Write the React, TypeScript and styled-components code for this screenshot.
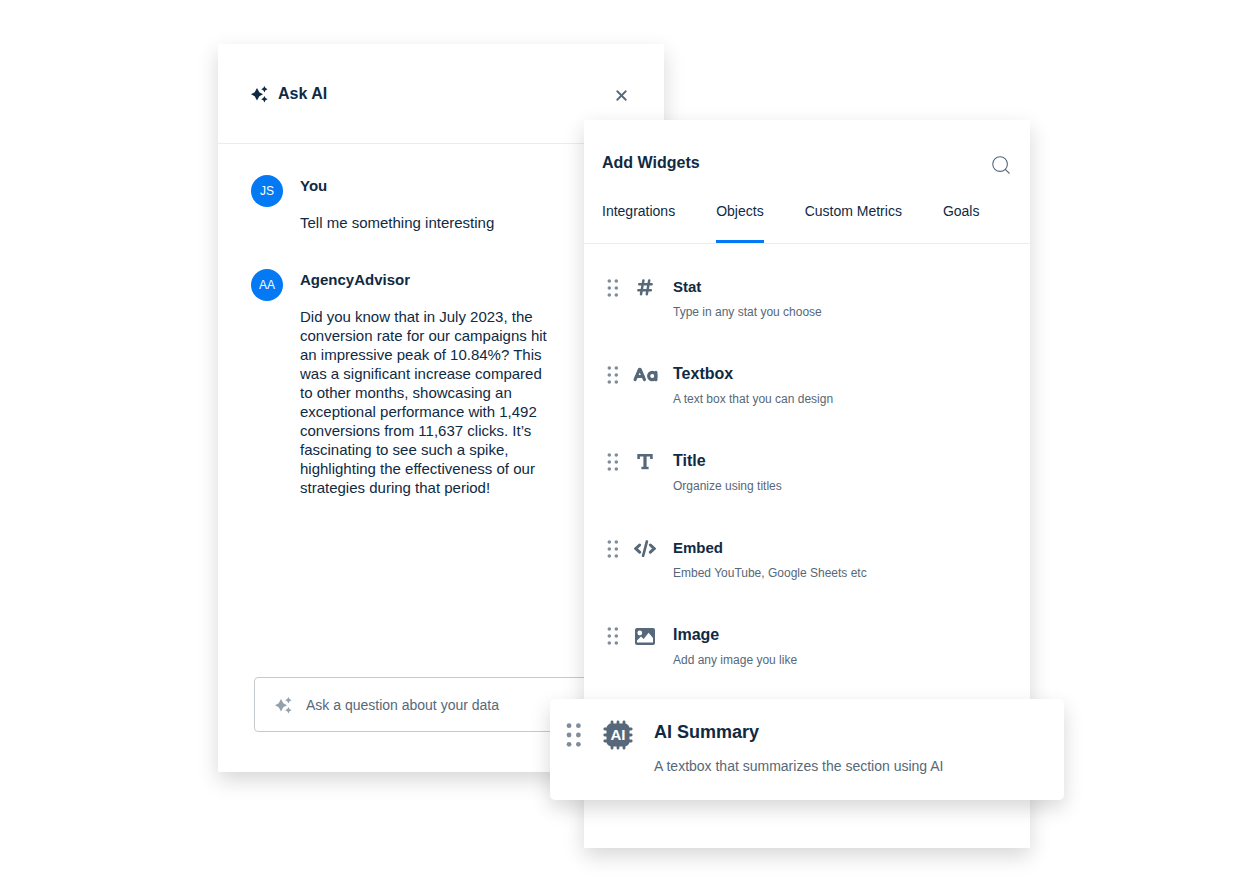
import React from "react";
import styled, { createGlobalStyle } from "styled-components";
import { CaseSensitive, Search, X } from "lucide-react";

const ink = "#0f2a43";
const slate = "#566879";
const blue = "#0479f4";
const line = "#ececee";

const GlobalStyle = createGlobalStyle`
  *, *::before, *::after { box-sizing: border-box; }
  body {
    margin: 0;
    background: #ffffff;
    color: ${ink};
    font-family: "Liberation Sans", Arial, Helvetica, sans-serif;
  }
  h2, h3, p, ul { margin: 0; padding: 0; }
  ul { list-style: none; }
  button {
    padding: 0;
    border: 0;
    background: none;
    color: inherit;
    font: inherit;
    cursor: pointer;
  }
  svg { display: block; flex: none; }
`;

const Stage = styled.main`
  display: grid;
  grid-template-columns: 366fr 80fr 366fr;
  padding: 44px 218px;
`;

const Panel = styled.section`
  display: flex;
  flex-direction: column;
  min-height: 728px;
  background: #ffffff;
  box-shadow: 0 8px 20px rgba(0, 0, 0, 0.16);
`;

const ChatPanel = styled(Panel)`
  grid-area: 1 / 1 / 2 / 3;
  align-self: start;
`;

const WidgetPanel = styled(Panel)`
  grid-area: 1 / 2 / 2 / 4;
  margin-top: 76px;
  padding-bottom: 48px;
`;

const ChatHeader = styled.header`
  display: flex;
  align-items: center;
  gap: 10px;
  height: 100px;
  padding: 0 34px 0 33px;
  border-bottom: 1px solid ${line};
`;

const Heading = styled.h2`
  flex: 1;
  font-size: 16px;
  line-height: 20px;
`;

const IconButton = styled.button`
  padding-top: 4px;
  color: ${slate};
`;

const Messages = styled.div`
  flex: 1;
  display: flex;
  flex-direction: column;
  gap: 37px;
  padding: 31px 33px;
`;

const Message = styled.article`
  display: flex;
  align-items: flex-start;
  gap: 17px;
`;

const Avatar = styled.span`
  display: grid;
  place-items: center;
  flex: none;
  width: 32px;
  height: 32px;
  border-radius: 50%;
  background: ${blue};
  color: #ffffff;
  font-size: 12px;
`;

const MessageBody = styled.div`
  max-width: 256px;
`;

const Author = styled.h3`
  margin-bottom: 16px;
  font-size: 15px;
  line-height: 22px;
`;

const MessageText = styled.p`
  font-size: 15px;
  line-height: 19px;
`;

const AskField = styled.label`
  display: flex;
  align-items: center;
  gap: 14px;
  height: 55px;
  margin: 0 36px 40px;
  padding: 0 20px;
  border: 1px solid #c5cacf;
  border-radius: 4px;
  color: #95a0aa;
`;

const AskInput = styled.input`
  flex: 1;
  min-width: 0;
  padding: 0;
  border: 0;
  outline: 0;
  background: none;
  color: ${ink};
  font: inherit;
  font-size: 14px;
  &::placeholder {
    color: ${slate};
    opacity: 1;
  }
`;

const WidgetHeader = styled.header`
  display: flex;
  align-items: center;
  padding: 30px 18px 0;
`;

const Tabs = styled.nav`
  display: flex;
  gap: 41px;
  margin-top: 14px;
  padding: 0 18px;
  border-bottom: 1px solid ${line};
`;

const Tab = styled.button<{ $active?: boolean }>`
  height: 53px;
  padding-bottom: 8px;
  border-bottom: 3px solid ${(p) => (p.$active ? blue : "transparent")};
  font-size: 14px;
  line-height: 16px;
`;

const WidgetList = styled.ul`
  padding-top: 31px;
`;

const WidgetItem = styled.li`
  display: grid;
  grid-template-columns: 12px 24px 1fr;
  column-gap: 14px;
  height: 87px;
  padding-left: 23px;
`;

const IconCell = styled.span`
  display: flex;
  align-items: center;
  justify-content: center;
  height: 26px;
  color: ${slate};
`;

const WidgetText = styled.div`
  padding: 0 2px;
`;

const WidgetName = styled.h3<{ $size: number }>`
  font-size: ${(p) => p.$size}px;
  line-height: 24px;
`;

const WidgetNote = styled.p`
  margin-top: 4px;
  color: ${slate};
  font-size: 12px;
  line-height: 18px;
`;

const FeaturedCard = styled.div`
  display: grid;
  grid-template-columns: 16px 30px 1fr;
  column-gap: 21px;
  align-items: start;
  height: 101px;
  margin: -11px -34px 0;
  padding: 20px 16px;
  border-radius: 5px;
  background: #ffffff;
  box-shadow: 0 8px 20px rgba(0, 0, 0, 0.16);
`;

const FeaturedIcon = styled.span`
  display: flex;
  align-items: center;
  height: 32px;
  color: ${slate};
`;

const FeaturedName = styled.h3`
  font-size: 18px;
  line-height: 26px;
`;

const FeaturedNote = styled.p`
  margin-top: 12px;
  color: ${slate};
  font-size: 14px;
  line-height: 18px;
`;

const Sparkles = () => (
  <svg width="17" height="18" viewBox="0 0 17 18" fill="currentColor" aria-hidden="true">
    <path d="M6 3L8.3 7.2L12 9.2L8.3 11.2L6 15.4L3.7 11.2L0 9.2L3.7 7.2Z" />
    <path d="M13.4 1L14.5 3.1L16.6 4.2L14.5 5.3L13.4 7.4L12.3 5.3L10.2 4.2L12.3 3.1Z" />
    <path d="M13.4 11L14.5 13.1L16.6 14.2L14.5 15.3L13.4 17.4L12.3 15.3L10.2 14.2L12.3 13.1Z" />
  </svg>
);

const Grip = ({ width }: { width: number }) => (
  <svg width={width} viewBox="0 0 12 18" fill="#7f8d9a" aria-hidden="true">
    {[2, 9, 16].map((y) => (
      <React.Fragment key={y}>
        <circle cx="2.3" cy={y} r="1.8" />
        <circle cx="9.3" cy={y} r="1.8" />
      </React.Fragment>
    ))}
  </svg>
);

const NumberSign = () => (
  <svg width="16" height="18" viewBox="0 0 16 18" fill="none" stroke="currentColor" strokeWidth="2.5" strokeLinecap="round" aria-hidden="true">
    <path d="M6.4 1.4L4 15.2M12.2 1.4L9.8 15.2M2.2 5.3H14.6M1.4 11.2H13.8" />
  </svg>
);

const TitleMark = () => (
  <svg width="16" height="18" viewBox="0 0 16 18" fill="none" stroke="currentColor" aria-hidden="true">
    <path d="M1.6 6V2.2H14.4V6" strokeWidth="2.6" />
    <path d="M8 2.2V15" strokeWidth="3.2" />
    <path d="M4.4 15H11.6" strokeWidth="2.4" />
  </svg>
);

const CodeMark = () => (
  <svg width="22" height="18" viewBox="0 0 22 18" fill="none" stroke="currentColor" strokeWidth="3" strokeLinecap="round" aria-hidden="true">
    <path d="M5.6 5L1.8 8.6L5.6 12.2M16.4 5L20.2 8.6L16.4 12.2" />
    <path d="M12.9 1.4L9.1 15.8" strokeWidth="2.6" />
  </svg>
);

const Picture = () => (
  <svg width="20" height="17" viewBox="0 0 20 17" aria-hidden="true">
    <rect width="20" height="17" rx="2" fill="currentColor" />
    <circle cx="4.8" cy="5" r="2.4" fill="#fff" />
    <path d="M2 14.5V12.5L6 8.6L8.6 11L13.6 4.8L18 10V14.5Z" fill="#fff" />
  </svg>
);

const AiChip = () => (
  <svg width="30" height="30" viewBox="0 0 30 30" aria-hidden="true">
    <path
      d="M9 1.8V28.2M15 1.8V28.2M21 1.8V28.2M1.8 9H28.2M1.8 15H28.2M1.8 21H28.2"
      stroke="currentColor"
      strokeWidth="2.8"
      strokeLinecap="round"
    />
    <rect x="3.5" y="3.5" width="23" height="23" rx="5" fill="currentColor" />
    <text x="15" y="20" textAnchor="middle" fontSize="15" fontWeight="700" fill="#fff">
      AI
    </text>
  </svg>
);

const widgets = [
  { name: "Stat", note: "Type in any stat you choose", size: 15, icon: <NumberSign /> },
  { name: "Textbox", note: "A text box that you can design", size: 16, icon: <CaseSensitive size={25} strokeWidth={3} /> },
  { name: "Title", note: "Organize using titles", size: 16, icon: <TitleMark /> },
  { name: "Embed", note: "Embed YouTube, Google Sheets etc", size: 15, icon: <CodeMark /> },
  { name: "Image", note: "Add any image you like", size: 16, icon: <Picture /> },
];

const tabs = ["Integrations", "Objects", "Custom Metrics", "Goals"];

export default function App() {
  return (
    <>
      <GlobalStyle />
      <Stage>
        <ChatPanel>
          <ChatHeader>
            <Sparkles />
            <Heading>Ask AI</Heading>
            <IconButton aria-label="Close">
              <X size={17} strokeWidth={2.6} />
            </IconButton>
          </ChatHeader>
          <Messages>
            <Message>
              <Avatar>JS</Avatar>
              <MessageBody>
                <Author>You</Author>
                <MessageText>Tell me something interesting</MessageText>
              </MessageBody>
            </Message>
            <Message>
              <Avatar>AA</Avatar>
              <MessageBody>
                <Author>AgencyAdvisor</Author>
                <MessageText>
                  Did you know that in July 2023, the conversion rate for our campaigns hit an impressive
                  peak of 10.84%? This was a significant increase compared to other months, showcasing an
                  exceptional performance with 1,492 conversions from 11,637 clicks. It’s fascinating to see
                  such a spike, highlighting the effectiveness of our strategies during that period!
                </MessageText>
              </MessageBody>
            </Message>
          </Messages>
          <AskField>
            <Sparkles />
            <AskInput aria-label="Ask a question" placeholder="Ask a question about your data" />
          </AskField>
        </ChatPanel>

        <WidgetPanel>
          <WidgetHeader>
            <Heading>Add Widgets</Heading>
            <IconButton aria-label="Search">
              <Search size={22} strokeWidth={1.2} />
            </IconButton>
          </WidgetHeader>
          <Tabs>
            {tabs.map((tab) => (
              <Tab key={tab} $active={tab === "Objects"}>
                {tab}
              </Tab>
            ))}
          </Tabs>
          <WidgetList>
            {widgets.map((w) => (
              <WidgetItem key={w.name}>
                <IconCell>
                  <Grip width={12} />
                </IconCell>
                <IconCell>{w.icon}</IconCell>
                <WidgetText>
                  <WidgetName $size={w.size}>{w.name}</WidgetName>
                  <WidgetNote>{w.note}</WidgetNote>
                </WidgetText>
              </WidgetItem>
            ))}
          </WidgetList>
          <FeaturedCard>
            <FeaturedIcon>
              <Grip width={16} />
            </FeaturedIcon>
            <FeaturedIcon>
              <AiChip />
            </FeaturedIcon>
            <div>
              <FeaturedName>AI Summary</FeaturedName>
              <FeaturedNote>A textbox that summarizes the section using AI</FeaturedNote>
            </div>
          </FeaturedCard>
        </WidgetPanel>
      </Stage>
    </>
  );
}
